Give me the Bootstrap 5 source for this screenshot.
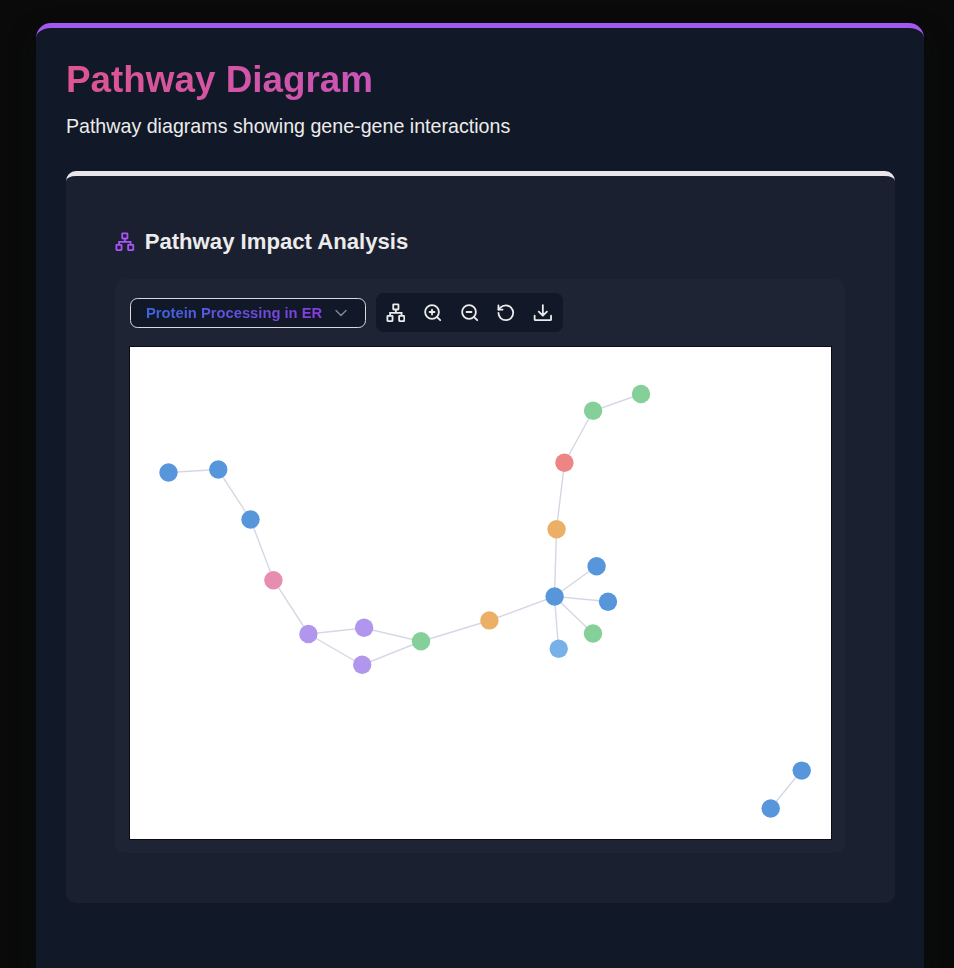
<!DOCTYPE html>
<html lang="en">
<head>
<meta charset="utf-8">
<meta name="viewport" content="width=device-width, initial-scale=1">
<title>Pathway Diagram</title>
<link href="https://cdn.jsdelivr.net/npm/bootstrap@5.3.0/dist/css/bootstrap.min.css" rel="stylesheet">
<style>
body{background:#0a0a0a;font-family:"Liberation Sans",Arial,sans-serif;color:#ececec}
.page-panel{height:945px;background:#111827;border-top:5px solid #a259f0;border-radius:15px 15px 0 0;padding:30px 29.5px 0;box-shadow:0 12px 24px rgba(8,18,18,.55)}
.page-wrap{padding:23px 30px 0 36px;height:968px;overflow:hidden}
.page-title{font-size:36.85px;line-height:44px;font-weight:700;margin:0 0 9px;padding-left:.5px;background:linear-gradient(90deg,#dd5590,#a855f7);-webkit-background-clip:text;background-clip:text;color:transparent}
.page-sub{font-size:19.65px;line-height:30px;margin:0;padding-left:.4px}
.analysis{margin-top:30px;height:732px;background:#1b2030;border-top:5px solid #e8e6ea;border-radius:10px;padding:51px 49.5px 49px}
.analysis h2{font-size:22.14px;line-height:30px;font-weight:700;gap:10px}
.viewer{margin-top:22px;height:574px;background:#1f2435;border-radius:10px;padding:14px 14.5px}
.pick{width:236.5px;height:30px;border:1.5px solid #d9d9dc;border-radius:7.5px;background:#111827;padding:0 16.5px 0 15.5px;font-size:14.76px;font-weight:700;line-height:1}
.pick-label{background:linear-gradient(90deg,#3d66e0,#8a3be0);-webkit-background-clip:text;background-clip:text;color:transparent;line-height:20px;padding-top:1px}
.tools{height:39.4px;background:#111827;border-radius:7.5px;padding:0 4.9px;gap:7.4px}
.tools button{width:29.5px;height:29.5px;padding:0;border:0;background:none;color:#ececec}
.ico{fill:none;stroke:currentColor;stroke-width:2.2;stroke-linecap:round;stroke-linejoin:round;width:19.68px;height:19.68px;flex:none}
.ico-tree{stroke-linejoin:miter;stroke-linecap:butt}
.chev{color:#858a94;width:16px;stroke-width:2}
.tint{color:#a855f7}
.graph{margin-top:14.6px;width:701px;height:492px;background:#fff;box-shadow:0 0 0 1px #090c14}
.edges{stroke:#d3d8e4;stroke-width:1.4;fill:none}
.blue{fill:#5896dc}.green{fill:#84d098}.violet{fill:#b096ec}.amber{fill:#ebaf65}.rose{fill:#e78db0}.red{fill:#ee8585}.sky{fill:#77b1e8}
</style>
</head>
<body>
<div class="page-wrap">
<main class="page-panel">
  <h1 class="page-title">Pathway Diagram</h1>
  <p class="page-sub">Pathway diagrams showing gene-gene interactions</p>
  <section class="analysis">
    <h2 class="d-flex align-items-center mb-0">
      <svg class="ico ico-tree tint" viewBox="0 0 24 24"><rect x="16" y="15.7" width="6.3" height="6.3" rx=".6"/><rect x="1.7" y="15.7" width="6.3" height="6.3" rx=".6"/><rect x="8.8" y="1.6" width="6.4" height="6.3" rx=".6"/><path d="M5 16v-4h14v4M12 12V8"/></svg>
      <span>Pathway Impact Analysis</span>
    </h2>
    <div class="viewer">
      <div class="d-flex align-items-center" style="gap:10px">
        <button class="pick d-flex align-items-center justify-content-between" type="button">
          <span class="pick-label">Protein Processing in ER</span>
          <svg class="ico chev" viewBox="0 0 24 24"><path d="m4.5 8.5 7.5 7.5 7.5-7.5"/></svg>
        </button>
        <div class="tools d-flex align-items-center">
          <button class="d-flex align-items-center justify-content-center" type="button" aria-label="Layout"><svg class="ico ico-tree" viewBox="0 0 24 24"><rect x="16" y="15.7" width="6.3" height="6.3" rx=".6"/><rect x="1.7" y="15.7" width="6.3" height="6.3" rx=".6"/><rect x="8.8" y="1.6" width="6.4" height="6.3" rx=".6"/><path d="M5 16v-4h14v4M12 12V8"/></svg></button>
          <button class="d-flex align-items-center justify-content-center" type="button" aria-label="Zoom in"><svg class="ico" viewBox="0 0 24 24"><circle cx="11" cy="11" r="8.4"/><path d="m21 21-4.1-4.1M11 8v6M8 11h6"/></svg></button>
          <button class="d-flex align-items-center justify-content-center" type="button" aria-label="Zoom out"><svg class="ico" viewBox="0 0 24 24"><circle cx="11" cy="11" r="8.4"/><path d="m21 21-4.1-4.1M8 11h6"/></svg></button>
          <button class="d-flex align-items-center justify-content-center" type="button" aria-label="Reset"><svg class="ico" viewBox="0 0 24 24"><path d="M3 12a9 9 0 1 0 9-9 9.75 9.75 0 0 0-6.74 2.74L3 8"/><path d="M3 3v5h5"/></svg></button>
          <button class="d-flex align-items-center justify-content-center" type="button" aria-label="Download"><svg class="ico" viewBox="0 0 24 24"><path d="M22 15.5V20a1 1 0 0 1-1 1H3a1 1 0 0 1-1-1v-4.5M7 10.5l5 5 5-5M12 15V2.5"/></svg></button>
        </div>
      </div>
      <svg class="graph d-block" viewBox="130 347 701 492">
        <path class="edges" d="M168.5 472.5 218 469.5 250.5 519.5 273.5 580 308.5 634 364 628 421 641.5 489.5 620.5 554.5 596.5 556.5 529 564.5 463 593 411 641 394M308.5 634 362 665 421 641.5M554.5 596.5 596.5 566M554.5 596.5 608 601.5M554.5 596.5 593 633.5M554.5 596.5 558.5 649M801.5 770.5 770.5 808.5"/>
        <g class="blue"><circle cx="168.5" cy="472.5" r="9.2"/><circle cx="218.3" cy="469.5" r="9.2"/><circle cx="250.5" cy="519.5" r="9.2"/><circle cx="554.6" cy="596.5" r="9.2"/><circle cx="596.6" cy="566.2" r="9.2"/><circle cx="608" cy="601.7" r="9.2"/><circle cx="801.7" cy="770.6" r="9.2"/><circle cx="770.7" cy="808.5" r="9.2"/></g>
        <g class="green"><circle cx="421" cy="641.3" r="9.2"/><circle cx="593" cy="633.5" r="9.2"/><circle cx="593.1" cy="410.7" r="9.2"/><circle cx="641" cy="394" r="9.2"/></g>
        <g class="violet"><circle cx="308.4" cy="634" r="9.2"/><circle cx="364.1" cy="627.8" r="9.2"/><circle cx="362.2" cy="664.8" r="9.2"/></g>
        <g class="amber"><circle cx="489.4" cy="620.4" r="9.2"/><circle cx="556.6" cy="529.2" r="9.2"/></g>
        <circle class="rose" cx="273.4" cy="580.2" r="9.2"/>
        <circle class="red" cx="564.4" cy="462.7" r="9.2"/>
        <circle class="sky" cx="558.7" cy="648.8" r="9.2"/>
      </svg>
    </div>
  </section>
</main>
</div>
<script src="https://cdn.jsdelivr.net/npm/bootstrap@5.3.0/dist/js/bootstrap.bundle.min.js"></script>
</body>
</html>
